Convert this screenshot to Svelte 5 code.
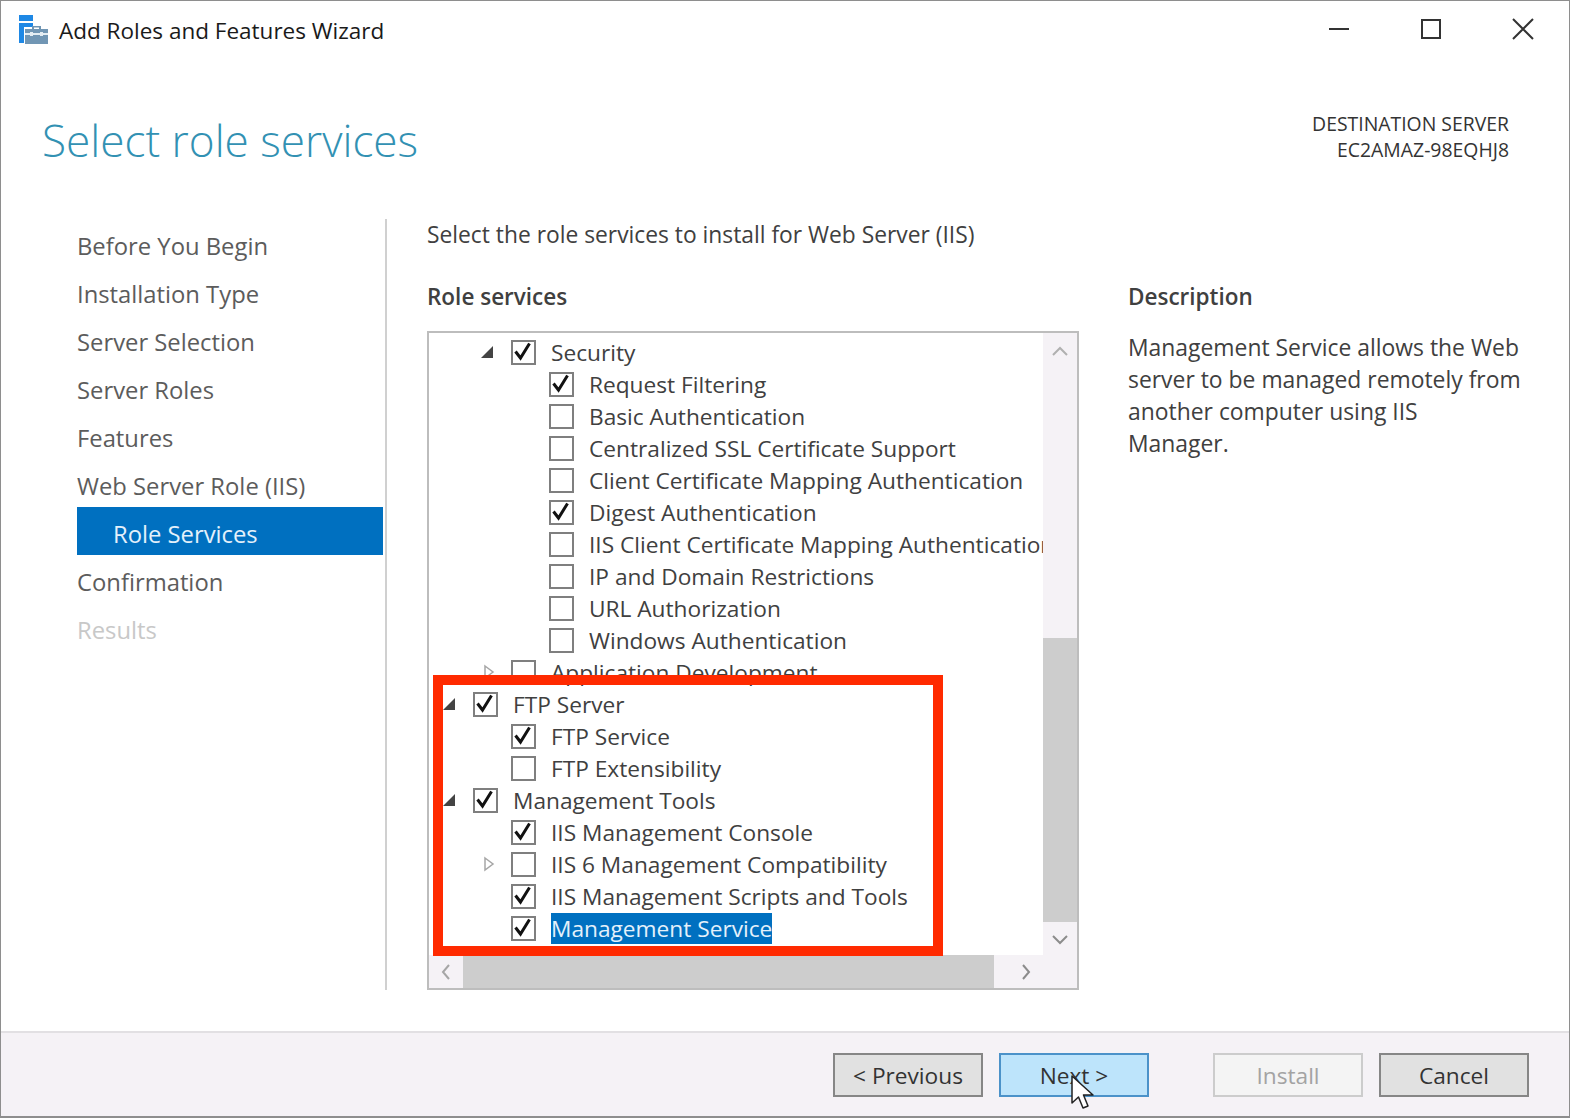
<script>
	const steps = [
		{ label: 'Before You Begin' },
		{ label: 'Installation Type' },
		{ label: 'Server Selection' },
		{ label: 'Server Roles' },
		{ label: 'Features' },
		{ label: 'Web Server Role (IIS)' },
		{ label: 'Role Services', active: true },
		{ label: 'Confirmation' },
		{ label: 'Results', disabled: true }
	];

	// level: 0 = FTP Server depth, exp: open / closed / none
	const rows = [
		{ label: 'Security', level: 1, checked: true, exp: 'open' },
		{ label: 'Request Filtering', level: 2, checked: true },
		{ label: 'Basic Authentication', level: 2 },
		{ label: 'Centralized SSL Certificate Support', level: 2 },
		{ label: 'Client Certificate Mapping Authentication', level: 2 },
		{ label: 'Digest Authentication', level: 2, checked: true },
		{ label: 'IIS Client Certificate Mapping Authentication', level: 2 },
		{ label: 'IP and Domain Restrictions', level: 2 },
		{ label: 'URL Authorization', level: 2 },
		{ label: 'Windows Authentication', level: 2 },
		{ label: 'Application Development', level: 1, exp: 'closed' },
		{ label: 'FTP Server', level: 0, checked: true, exp: 'open' },
		{ label: 'FTP Service', level: 1, checked: true },
		{ label: 'FTP Extensibility', level: 1 },
		{ label: 'Management Tools', level: 0, checked: true, exp: 'open' },
		{ label: 'IIS Management Console', level: 1, checked: true },
		{ label: 'IIS 6 Management Compatibility', level: 1, exp: 'closed' },
		{ label: 'IIS Management Scripts and Tools', level: 1, checked: true },
		{ label: 'Management Service', level: 1, checked: true, selected: true }
	];
</script>

<div class="window">
	<header class="titlebar">
		<svg class="app-icon" width="30" height="30" viewBox="0 0 30 30">
			<rect x="1" y="0" width="14" height="6" fill="#1e88e5" />
			<path d="M1 8h14v4H6v16H1z" fill="#1e88e5" />
			<path d="M7 14h23v15H7z" fill="#7196b4" />
			<path d="M14 14v-3h9v3h-2v-1.500h-5V14z" fill="#7196b4" />
			<rect x="7" y="18" width="23" height="2" fill="#e4edf3" />
			<rect x="12" y="17" width="3" height="4" fill="#e4edf3" />
			<rect x="22" y="17" width="3" height="4" fill="#e4edf3" />
		</svg>
		<span class="window-title">Add Roles and Features Wizard</span>
		<div class="window-controls">
			<svg width="22" height="22" viewBox="0 0 22 22"><path d="M1 11h20" stroke="#333" stroke-width="2" /></svg>
			<svg width="22" height="22" viewBox="0 0 22 22"><rect x="2" y="2" width="18" height="18" fill="none" stroke="#333" stroke-width="2" /></svg>
			<svg width="22" height="22" viewBox="0 0 22 22"><path d="M1 1l20 20M21 1L1 21" stroke="#333" stroke-width="2" /></svg>
		</div>
	</header>

	<div class="page-head">
		<h1>Select role services</h1>
		<div class="destination">DESTINATION SERVER<br />EC2AMAZ-98EQHJ8</div>
	</div>

	<div class="content">
		<nav class="steps">
			{#each steps as step}
				<div class="step" class:active={step.active} class:disabled={step.disabled}>{step.label}</div>
			{/each}
		</nav>

		<main class="panel">
			<p class="intro">Select the role services to install for Web Server (IIS)</p>
			<div class="columns">
				<section class="services">
					<h2>Role services</h2>
					<div class="listbox">
						<div class="tree">
							{#each rows as row}
								<div class="row level-{row.level}">
									<span class="expander">
										{#if row.exp === 'open'}
											<svg width="14" height="14" viewBox="0 0 14 14"><path d="M13 1v12H1z" fill="#444" /></svg>
										{:else if row.exp === 'closed'}
											<svg class="closed" width="12" height="16" viewBox="0 0 12 16"><path d="M2 2l8 6-8 6z" fill="#fff" stroke="#a6a6a6" stroke-width="1.500" /></svg>
										{/if}
									</span>
									<span class="checkbox">
										{#if row.checked}
											<svg width="21" height="21" viewBox="0 0 21 21"><path d="M2.500 9.500L7.500 16l9-14.500" fill="none" stroke="#111" stroke-width="3" /></svg>
										{/if}
									</span>
									<span class="label" class:selected={row.selected}>{row.label}</span>
								</div>
							{/each}
						</div>
						<div class="vscroll">
							<svg width="18" height="12" viewBox="0 0 18 12"><path d="M2 10l7-7 7 7" fill="none" stroke="#b0b0b0" stroke-width="2" /></svg>
							<div class="vtrack"><div class="vthumb"></div></div>
							<svg width="18" height="12" viewBox="0 0 18 12"><path d="M2 2l7 7 7-7" fill="none" stroke="#8c8c8c" stroke-width="2" /></svg>
						</div>
						<div class="hscroll">
							<svg width="12" height="18" viewBox="0 0 12 18"><path d="M9 2L3 9l6 7" fill="none" stroke="#a6a6a6" stroke-width="2" /></svg>
							<div class="hthumb"></div>
							<svg width="12" height="18" viewBox="0 0 12 18"><path d="M3 2l6 7-6 7" fill="none" stroke="#8c8c8c" stroke-width="2" /></svg>
						</div>
						<div class="callout"></div>
					</div>
				</section>
				<aside class="description">
					<h2>Description</h2>
					<p>Management Service allows the Web server to be managed remotely from another computer using IIS Manager.</p>
				</aside>
			</div>
		</main>
	</div>

	<footer class="footer">
		<button>&lt; Previous</button>
		<button class="hover">Next &gt;</button>
		<button class="off install">Install</button>
		<button>Cancel</button>
		<svg class="cursor" width="26" height="38" viewBox="0 0 26 38">
			<path d="M2 1v27l6.500-6 4.500 11 5-2-4.500-11H23z" fill="#fff" stroke="#222" stroke-width="1.500" stroke-linejoin="round" />
		</svg>
	</footer>
</div>

<style>
	:global(body) {
		margin: 0;
		background: #fff;
	}

	.window {
		position: relative;
		height: 1118px;
		box-sizing: border-box;
		display: flex;
		flex-direction: column;
		border: 1px solid #8e8e8e;
		border-width: 1px 1px 2px 1px;
		background: #fff;
		overflow: hidden;
		font-family: "Open Sans", sans-serif;
		font-size: 22.700px;
		color: #404040;
	}

	.titlebar {
		height: 60px;
		box-sizing: border-box;
		display: flex;
		align-items: center;
		padding: 0 0 2px 17px;
		flex: none;
	}

	.app-icon {
		margin-right: 11px;
	}

	.window-title {
		font-size: 22.500px;
		color: #1a1a1a;
	}

	.window-controls {
		margin-left: auto;
		margin-top: -2px;
		display: flex;
		gap: 70px;
		padding-right: 35px;
	}

	.page-head {
		height: 158px;
		flex: none;
		display: flex;
		justify-content: space-between;
		box-sizing: border-box;
		padding: 0 60px 0 41px;
	}

	h1 {
		margin: 49px 0 0;
		font-size: 44.100px;
		font-weight: 300;
		line-height: 60px;
		color: #3291b3;
	}

	.destination {
		margin-top: 50px;
		text-align: right;
		font-size: 19.400px;
		line-height: 26px;
		color: #333;
	}

	.content {
		flex: 1;
		display: flex;
		padding-left: 76px;
		min-height: 0;
	}

	.steps {
		width: 310px;
		flex: none;
		border-right: 2px solid #d0d0d0;
		box-sizing: border-box;
		margin-bottom: 41px;
	}

	.step {
		height: 48px;
		box-sizing: border-box;
		width: 306px;
		padding-top: 6px;
		line-height: 42px;
		font-size: 23.800px;
		color: #5c5c5c;
	}

	.step.active {
		background: #0070c0;
		color: #e4f1fb;
		padding-left: 36px;
	}

	.step.disabled {
		color: #c8c8c8;
	}

	.panel {
		padding-left: 40px;
		flex: 1;
		min-width: 0;
	}

	.intro {
		margin: 0;
		height: 31px;
		line-height: 32px;
		font-size: 22.800px;
		color: #404040;
	}

	.columns {
		display: flex;
		gap: 49px;
		margin-top: 32px;
	}

	h2 {
		margin: 0;
		font-size: 22.500px;
		font-weight: 600;
		line-height: 30px;
		color: #404040;
	}

	.listbox {
		position: relative;
		margin-top: 19px;
		width: 652px;
		height: 659px;
		box-sizing: border-box;
		border: 2px solid #bdbdbd;
		display: grid;
		grid-template-columns: minmax(0, 1fr) 34px;
		grid-template-rows: minmax(0, 1fr) 33px;
	}

	.tree {
		overflow: hidden;
		padding-top: 3px;
		min-width: 0;
	}

	.row {
		height: 32px;
		display: flex;
		align-items: center;
		white-space: nowrap;
		color: #404040;
	}

	.level-0 { padding-left: 10px; }
	.level-1 { padding-left: 48px; }
	.level-2 { padding-left: 86px; }

	.expander {
		width: 34px;
		height: 32px;
		flex: none;
		display: flex;
		align-items: center;
		justify-content: flex-start;
		padding-left: 3px;
		box-sizing: border-box;
	}

	.closed {
		margin-left: 3px;
	}

	.checkbox {
		width: 25px;
		height: 25px;
		flex: none;
		box-sizing: border-box;
		border: 2px solid #7f7f7f;
		background: #fff;
	}

	.checkbox svg {
		display: block;
	}

	.label {
		margin-left: 15px;
		line-height: 31px;
	}

	.label.selected {
		background: #0070c0;
		color: #e4f1fb;
	}

	.vscroll {
		background: #f5f2f6;
		display: flex;
		flex-direction: column;
		align-items: center;
		min-height: 0;
	}

	.vscroll svg {
		margin: 12px 0 9px;
		flex: none;
	}

	.vtrack {
		flex: 1;
		align-self: stretch;
	}

	.vthumb {
		margin-top: 272px;
		height: 284px;
		background: #cdcdcd;
	}

	.hscroll {
		grid-column: 1 / 3;
		background: #f5f2f6;
		display: flex;
		align-items: center;
		padding-left: 11px;
		padding-right: 45px;
	}

	.hthumb {
		width: 531px;
		height: 100%;
		margin-left: 11px;
		background: #cdcdcd;
	}

	.hscroll svg:last-child {
		margin-left: auto;
	}

	.callout {
		position: absolute;
		left: 4px;
		top: 342px;
		width: 510px;
		height: 281px;
		box-sizing: border-box;
		border: 10px solid #ff2a00;
	}

	.description {
		width: 393px;
	}

	.description p {
		margin: 20px 0 0;
		line-height: 32px;
		font-size: 22.900px;
	}

	.footer {
		position: relative;
		height: 85px;
		flex: none;
		box-sizing: border-box;
		background: #f5f2f6;
		border-top: 2px solid #e2e0e3;
		display: flex;
		align-items: center;
		padding-left: 832px;
		gap: 16px;
	}

	button {
		width: 150px;
		height: 44px;
		box-sizing: border-box;
		background: #e1e1e1;
		border: 2px solid #868686;
		font: inherit;
		color: #333;
		padding: 2px 0 0;
	}

	button.hover {
		background: #bde4fb;
		border-color: #4b92c9;
	}

	button.off {
		background: #f4f4f4;
		border-color: #cccccc;
		color: #a3a3a3;
	}

	.install {
		margin-left: 48px;
	}

	.cursor {
		position: absolute;
		left: 1069px;
		top: 42px;
	}
</style>
